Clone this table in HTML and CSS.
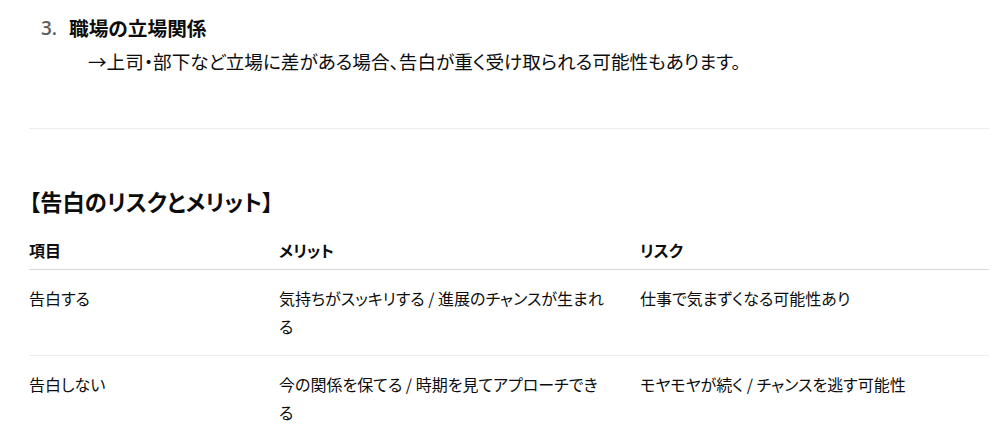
FILE: index.html
```html
<!DOCTYPE html>
<html lang="ja">
<head>
<meta charset="utf-8">
<link rel="stylesheet" href="styles.css">
</head>
<body>
<main class="content">
  <ol class="steps">
    <li class="step">
      <span class="step-num">3.</span>
      <div class="step-text">
        <strong class="step-title">職場の立場関係</strong>
        <p class="step-body">→上司・部下など立場に差がある場合、告白が重く受け取られる可能性もあります。</p>
      </div>
    </li>
  </ol>
  <hr class="divider">
  <h3 class="section-title">【告白のリスクとメリット】</h3>
  <table class="compare">
    <colgroup>
      <col class="c1"><col class="c2"><col class="c3">
    </colgroup>
    <thead>
      <tr><th>項目</th><th>メリット</th><th>リスク</th></tr>
    </thead>
    <tbody>
      <tr><td>告白する</td><td>気持ちがスッキリする / 進展のチャンスが生まれる</td><td>仕事で気まずくなる可能性あり</td></tr>
      <tr><td>告白しない</td><td>今の関係を保てる / 時期を見てアプローチできる</td><td>モヤモヤが続く / チャンスを逃す可能性</td></tr>
    </tbody>
  </table>
</main>
</body>
</html>
```

FILE: styles.css
```css
html, body {
  margin: 0;
  padding: 0;
  background: #ffffff;
}
body {
  font-family: "Noto Sans CJK JP", "Noto Sans", sans-serif;
  color: #0d0d0d;
  font-feature-settings: "palt";
}
.content {
  padding: 0 13px 0 29px;
}
.steps {
  list-style: none;
  margin: 12px 0 0 0;
  padding: 0;
}
.step {
  display: flex;
}
.step-num {
  width: 40px;
  box-sizing: border-box;
  padding-left: 12px;
  font-size: 19px;
  font-weight: 600;
  line-height: 32px;
  color: #5d5d5d;
  font-family: "Open Sans", "Noto Sans", sans-serif;
}
.step-text {
  flex: 1;
}
.step-title {
  display: block;
  font-size: 19.7px;
  font-weight: 700;
  line-height: 32px;
}
.step-body {
  margin: 0;
  padding-left: 19px;
  font-size: 18.6px;
  line-height: 34px;
}
.divider {
  border: 0;
  border-top: 1px solid #ececec;
  margin: 50px 0 0 0;
  height: 0;
}
.section-title {
  margin: 56px 0 19px 0;
  font-size: 22.3px;
  font-weight: 700;
  line-height: 32px;
}
.compare {
  width: 960px;
  border-collapse: collapse;
  table-layout: fixed;
  font-size: 16px;
  line-height: 28px;
}
.c1 { width: 250px; }
.c2 { width: 361px; }
.c3 { width: 349px; }
.compare th {
  text-align: left;
  font-weight: 700;
  padding: 0 30px 5px 0;
  border-bottom: 1px solid #d9d9d9;
}
.compare td {
  vertical-align: top;
  padding: 14px 30px 15px 0;
  border-bottom: 1px solid #ececec;
}
```
